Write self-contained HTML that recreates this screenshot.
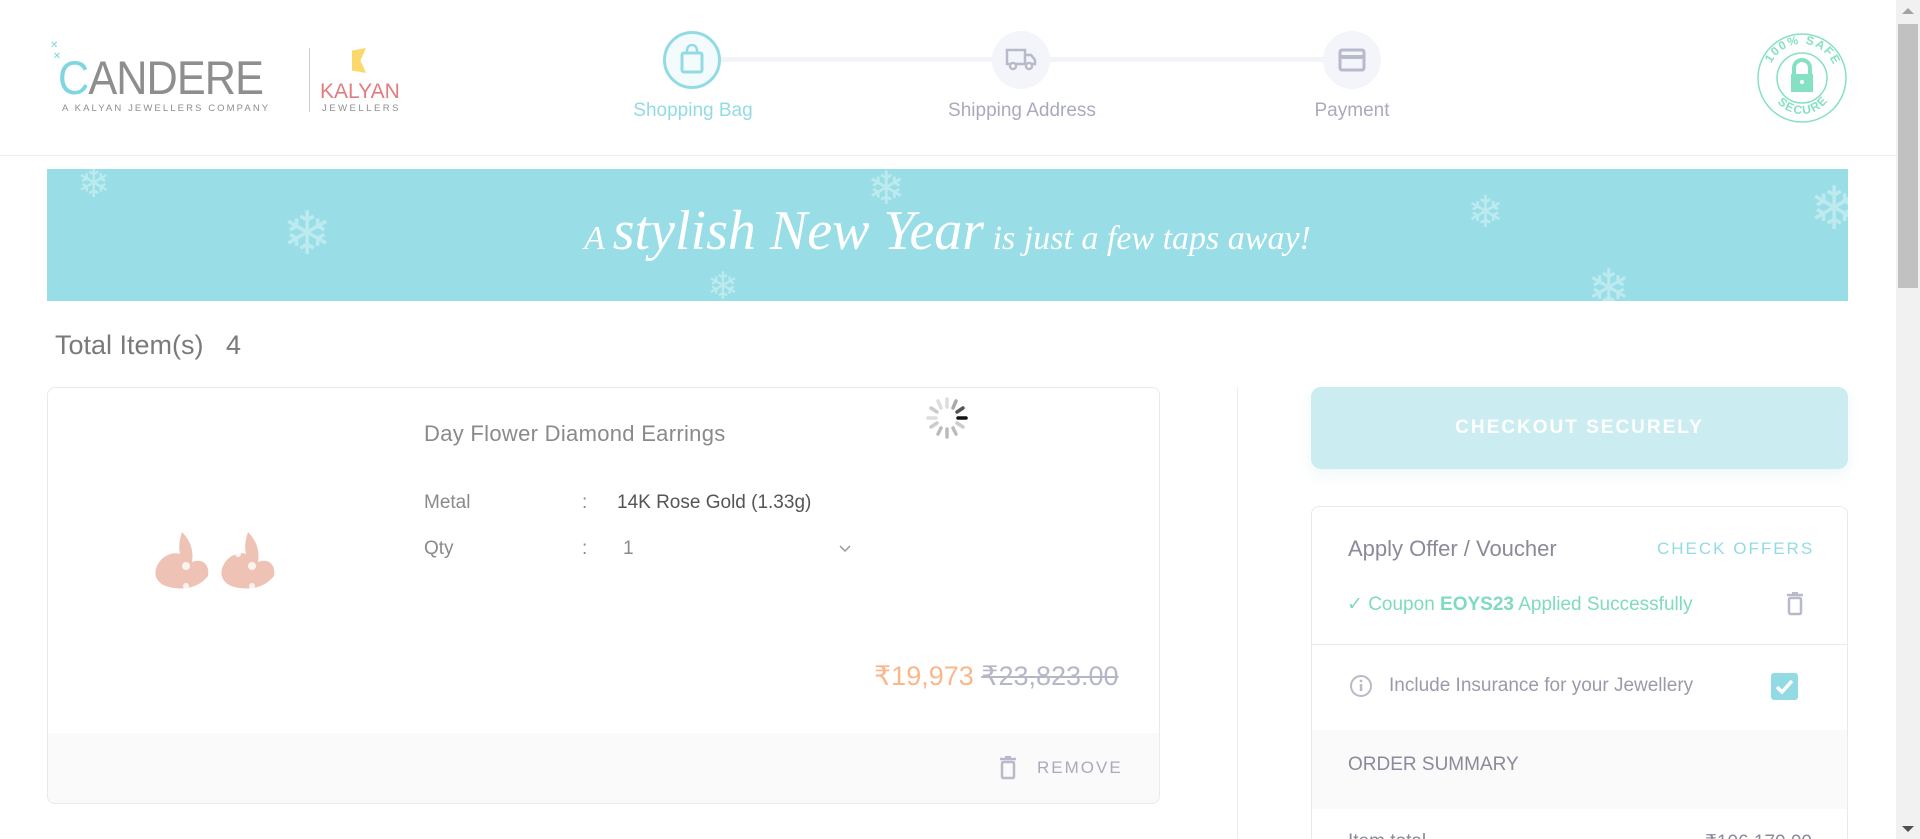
<!DOCTYPE html>
<html><head><meta charset="utf-8"><style>
*{box-sizing:border-box;margin:0;padding:0}
html,body{width:1920px;height:839px;overflow:hidden;background:#fff}
body{font-family:"Liberation Sans",sans-serif;color:#6b6b6b}
#w{position:relative;width:1920px;height:839px;overflow:hidden}
.a{position:absolute}
.sb{left:1896px;top:0;width:24px;height:839px;background:#f1f1f1}
.thumb{left:1898px;top:24px;width:20px;height:264px;background:#c1c1c1}
.line{left:710px;top:57px;width:620px;height:5px;background:#f3f4f8}
.circ{width:58px;height:58px;border-radius:50%;background:#f3f5fa}
.lbl{font-size:19px;color:#a9abbd;text-align:center;width:240px}
.snow{color:#c6edf1;opacity:.8}
</style></head><body><div id="w">
<!-- header -->
<div class="a" style="left:0;top:155px;width:1896px;height:1px;background:#ecebf2"></div>
<div class="a" style="left:50px;top:40px;font-size:10px;color:#7fd6e0">✕<br>&nbsp;✕</div>
<div class="a" style="left:58px;top:52px;font-size:47px;letter-spacing:-1px;color:#8e8e8e;line-height:52px;transform:scaleX(0.92);transform-origin:left"><span style="color:#7fd6e0">C</span>ANDERE</div>
<div class="a" style="left:62px;top:103px;font-size:9.5px;letter-spacing:2.1px;color:#8e8e8e">A KALYAN JEWELLERS COMPANY</div>
<div class="a" style="left:309px;top:48px;width:1px;height:64px;background:#ccc"></div>
<div class="a" style="left:352px;top:48px;width:14px;height:25px;background:#fbd86b;clip-path:polygon(0 10%,100% 0,60% 50%,100% 100%,0 90%)"></div>
<div class="a" style="left:320px;top:80px;font-size:21px;color:#e27c80;letter-spacing:0">KALYAN</div>
<div class="a" style="left:322px;top:103px;font-size:9.5px;letter-spacing:2.5px;color:#8e8e8e">JEWELLERS</div>

<div class="a line"></div>
<div class="a circ" style="left:663px;top:31px;background:#f3fbfd;border:3px solid #93dbe4"></div>
<svg class="a" style="left:679px;top:44px" width="26" height="30" viewBox="0 0 26 30"><rect x="3" y="9" width="20" height="19" rx="2" fill="none" stroke="#93dbe4" stroke-width="3"/><path d="M8 9V6a5 5 0 0 1 10 0v3" fill="none" stroke="#93dbe4" stroke-width="2.5"/></svg>
<div class="a lbl" style="left:573px;top:100px;color:#93dbe4">Shopping Bag</div>
<div class="a circ" style="left:992px;top:31px"></div>
<svg class="a" style="left:1005px;top:47px" width="32" height="24" viewBox="0 0 32 24"><path d="M2 3h18v14H2zM20 8h6l4 5v4H20z" fill="none" stroke="#b8b9ca" stroke-width="2.5"/><circle cx="8" cy="19" r="3" fill="#fff" stroke="#b8b9ca" stroke-width="2.5"/><circle cx="24" cy="19" r="3" fill="#fff" stroke="#b8b9ca" stroke-width="2.5"/></svg>
<div class="a lbl" style="left:902px;top:100px">Shipping Address</div>
<div class="a circ" style="left:1323px;top:31px"></div>
<svg class="a" style="left:1338px;top:48px" width="28" height="24" viewBox="0 0 28 24"><rect x="2" y="2" width="24" height="20" rx="2" fill="none" stroke="#b8b9ca" stroke-width="3"/><rect x="2" y="7" width="24" height="4" fill="#b8b9ca"/></svg>
<div class="a lbl" style="left:1232px;top:100px">Payment</div>

<svg class="a" style="left:1756px;top:32px" width="92" height="92" viewBox="0 0 92 92"><circle cx="46" cy="46" r="44" fill="none" stroke="#86e0c4" stroke-width="1.5"/><circle cx="46" cy="46" r="25" fill="none" stroke="#86e0c4" stroke-width="1.5"/><path d="M38 42v-6a8 8 0 0 1 16 0v6" fill="none" stroke="#86e0c4" stroke-width="4"/><rect x="35" y="42" width="22" height="18" fill="#86e0c4"/><circle cx="46" cy="50" r="2" fill="#fff"/><defs><path id="t" d="M12 46a34 34 0 0 1 68 0"/><path id="b" d="M14 50a32 32 0 0 0 64 0"/></defs><text font-size="12" font-weight="bold" fill="#86e0c4" letter-spacing="1.5"><textPath href="#t" startOffset="14%">100% SAFE</textPath></text><text font-size="12" font-weight="bold" fill="#86e0c4" letter-spacing="1.5"><textPath href="#b" startOffset="22%">SECURE</textPath></text></svg>

<!-- banner -->
<div class="a" style="left:47px;top:169px;width:1801px;height:132px;background:#99dee6;overflow:hidden">
<div class="a snow" style="left:30px;top:-8px;font-size:40px">❄</div>
<div class="a snow" style="left:235px;top:30px;font-size:60px">❄</div>
<div class="a snow" style="left:820px;top:-8px;font-size:46px">❄</div>
<div class="a snow" style="left:660px;top:95px;font-size:38px">❄</div>
<div class="a snow" style="left:1420px;top:18px;font-size:44px">❄</div>
<div class="a snow" style="left:1540px;top:90px;font-size:52px">❄</div>
<div class="a snow" style="left:1762px;top:5px;font-size:60px">❄</div>
<div class="a" style="left:0;top:30px;width:1801px;text-align:center;font-family:'Liberation Serif',serif;font-style:italic;color:#fff;white-space:nowrap"><span style="font-size:34px">A </span><span style="font-size:56px">stylish New Year</span><span style="font-size:34px"> is just a few taps away!</span></div>
</div>

<div class="a" style="left:55px;top:330px;font-size:27px;color:#7a7a7a">Total Item(s)&nbsp;&nbsp;&nbsp;4</div>

<!-- card -->
<div class="a" style="left:47px;top:387px;width:1113px;height:417px;border:1px solid #e9e9ef;border-radius:8px;overflow:hidden">
<div class="a" style="left:0;top:345px;width:1113px;height:72px;background:#fafafb"></div>
</div>
<svg class="a" style="left:152px;top:530px" width="140" height="66" viewBox="0 0 140 66"><g fill="#eec3b5"><path d="M30 2c8 8 12 18 10 30 10-4 18 2 16 14-8 10-20 14-34 12C4 56 0 44 6 34c6-10 16-12 22-10-2-8 0-16 2-22z"/><path d="M96 2c8 8 12 18 10 30 10-4 18 2 16 14-8 10-20 14-34 12-18-2-22-14-16-24 6-10 16-12 22-10-2-8 0-16 2-22z"/></g><g fill="#fff" opacity=".8"><circle cx="34" cy="36" r="4"/><circle cx="46" cy="24" r="3"/><circle cx="34" cy="56" r="3"/><circle cx="100" cy="36" r="4"/><circle cx="86" cy="24" r="3"/><circle cx="100" cy="56" r="3"/></g></svg>
<div class="a" style="left:424px;top:421px;font-size:22px;color:#8a8a8a;letter-spacing:.3px">Day Flower Diamond Earrings</div>
<svg class="a" style="left:924px;top:395px" width="46" height="46" viewBox="0 0 46 46"><g stroke-width="3.5" stroke-linecap="round"><line x1="23" y1="4" x2="23" y2="12" stroke="#ddd"/><line x1="32" y1="6" x2="29" y2="13" stroke="#aaa"/><line x1="39" y1="13" x2="33" y2="17" stroke="#555"/><line x1="42" y1="23" x2="34" y2="23" stroke="#111"/><line x1="39" y1="32" x2="33" y2="28" stroke="#ccc"/><line x1="32" y1="39" x2="29" y2="33" stroke="#bbb"/><line x1="23" y1="42" x2="23" y2="34" stroke="#bbb"/><line x1="14" y1="39" x2="17" y2="33" stroke="#bbb"/><line x1="7" y1="32" x2="13" y2="28" stroke="#ccc"/><line x1="4" y1="23" x2="12" y2="23" stroke="#ddd"/><line x1="7" y1="13" x2="13" y2="17" stroke="#ccc"/><line x1="14" y1="6" x2="17" y2="13" stroke="#ddd"/></g></svg>
<div class="a" style="left:424px;top:492px;font-size:19px;color:#8a8a8a">Metal</div>
<div class="a" style="left:582px;top:492px;font-size:19px;color:#8a8a8a">:</div>
<div class="a" style="left:617px;top:492px;font-size:19px;color:#555">14K Rose Gold (1.33g)</div>
<div class="a" style="left:424px;top:538px;font-size:19px;color:#8a8a8a">Qty</div>
<div class="a" style="left:582px;top:538px;font-size:19px;color:#8a8a8a">:</div>
<div class="a" style="left:623px;top:538px;font-size:19px;color:#8a8a8a">1</div>
<svg class="a" style="left:838px;top:544px" width="14" height="10" viewBox="0 0 14 10"><path d="M2 2l5 5 5-5" fill="none" stroke="#999" stroke-width="1.5"/></svg>
<div class="a" style="left:874px;top:661px;font-size:27px;color:#fbb78c">₹19,973 <span style="color:#b6b7c6;text-decoration:line-through">₹23,823.00</span></div>
<svg class="a" style="left:999px;top:756px" width="18" height="24" viewBox="0 0 18 24"><rect x="3" y="6" width="12" height="16" rx="1.5" fill="none" stroke="#b8b9ca" stroke-width="2.5"/><path d="M1 3h16M6 1h6" stroke="#b8b9ca" stroke-width="2.5"/></svg>
<div class="a" style="left:1037px;top:758px;font-size:17px;color:#a9abbd;letter-spacing:2px">REMOVE</div>

<div class="a" style="left:1237px;top:387px;width:1px;height:452px;background:#ececf1"></div>

<!-- right -->
<div class="a" style="left:1311px;top:387px;width:537px;height:82px;background:#cbedf1;border-radius:10px;box-shadow:0 6px 14px rgba(150,200,210,.15);color:#fff;font-weight:bold;font-size:19px;letter-spacing:2px;text-align:center;line-height:82px">CHECKOUT SECURELY</div>
<div class="a" style="left:1311px;top:506px;width:537px;height:333px;border:1px solid #e9e9ef;border-bottom:0;border-radius:8px 8px 0 0;overflow:hidden">
<div class="a" style="left:0;top:137px;width:537px;height:1px;background:#e9e9ef"></div>
<div class="a" style="left:0;top:223px;width:537px;height:79px;background:#fafafb"></div>
<div class="a" style="left:36px;top:324px;font-size:19px;color:#8a8a9a">Item total</div>
<div class="a" style="left:290px;top:324px;width:210px;text-align:right;font-size:19px;color:#8a8a9a">₹106,170.00</div>
</div>
<div class="a" style="left:1348px;top:536px;font-size:22px;color:#8a8a9a">Apply Offer / Voucher</div>
<div class="a" style="left:1657px;top:539px;font-size:17px;color:#93dbe4;letter-spacing:2px">CHECK OFFERS</div>
<div class="a" style="left:1347px;top:593px;font-size:19px;color:#7fdbbf">✓ Coupon <b>EOYS23</b> Applied Successfully</div>
<svg class="a" style="left:1786px;top:592px" width="18" height="24" viewBox="0 0 18 24"><rect x="3" y="6" width="12" height="16" rx="1.5" fill="none" stroke="#b8b9ca" stroke-width="2.5"/><path d="M1 3h16M6 1h6" stroke="#b8b9ca" stroke-width="2.5"/></svg>
<svg class="a" style="left:1349px;top:674px" width="24" height="24" viewBox="0 0 24 24"><circle cx="12" cy="12" r="10" fill="none" stroke="#b8b9ca" stroke-width="2"/><path d="M12 10v7" stroke="#b8b9ca" stroke-width="2.5"/><circle cx="12" cy="7" r="1.4" fill="#b8b9ca"/></svg>
<div class="a" style="left:1389px;top:675px;font-size:19px;color:#9a9aaa">Include Insurance for your Jewellery</div>
<div class="a" style="left:1771px;top:673px;width:27px;height:27px;background:#93dbe4;border-radius:3px"></div>
<svg class="a" style="left:1773px;top:676px" width="23" height="21" viewBox="0 0 23 21"><path d="M4 11l5 5 10-11" fill="none" stroke="#fff" stroke-width="3.5"/></svg>
<div class="a" style="left:1348px;top:754px;font-size:19px;color:#8a8a9a">ORDER SUMMARY</div>

<div class="a sb"></div><div class="a thumb"></div>
<div class="a" style="left:1902px;top:8px;border:6px solid transparent;border-bottom-color:#a3a3a3;border-top:0"></div>
<div class="a" style="left:1902px;top:826px;border:6px solid transparent;border-top-color:#505050;border-bottom:0"></div>
</div></body></html>
